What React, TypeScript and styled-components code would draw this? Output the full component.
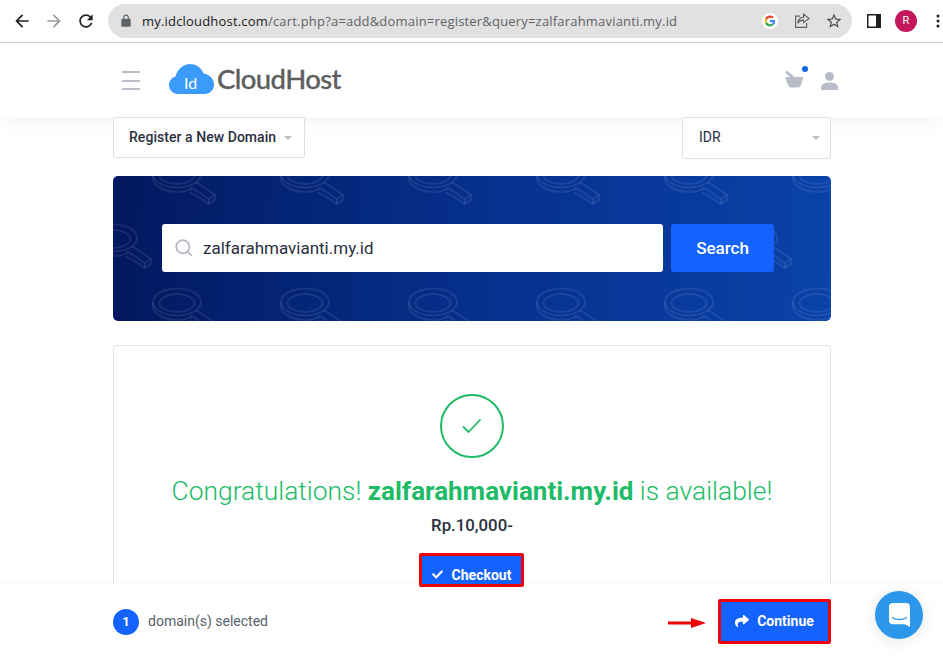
import React from "react";
import styled, { createGlobalStyle } from "styled-components";
import { FaCheck, FaShare } from "react-icons/fa";

const Global = createGlobalStyle`
  html, body { margin: 0; padding: 0; background: #fff; }
  body { font-family: Roboto, "Liberation Sans", sans-serif; color: #2a3040; }
  * { box-sizing: border-box; }
`;

const Page = styled.div`
  position: relative;
  width: 943px;
  height: 659px;
  overflow: hidden;
  background: #fff;
  display: flex;
  flex-direction: column;
`;

const Toolbar = styled.div`
  height: 43px;
  flex: none;
  display: flex;
  align-items: center;
  padding: 0 0 1px 6px;
  background: #fff;
  border-bottom: 1px solid #cfcfd1;
  overflow: hidden;
`;

const IconBox = styled.div<{ $w?: number }>`
  width: ${(p) => p.$w ?? 32}px;
  height: 32px;
  flex: none;
  display: flex;
  align-items: center;
  justify-content: center;
`;

const NavGroup = styled.div`
  display: flex;
  margin-right: 6px;
`;

const Omnibox = styled.div`
  width: 744px;
  height: 34px;
  flex: none;
  border-radius: 17px;
  background: #e1e1e1;
  display: flex;
  align-items: center;
  padding: 0 2px 0 11px;
`;

const UrlText = styled.div`
  flex: 1;
  margin-left: 9px;
  font-family: "Open Sans", "Noto Sans", sans-serif;
  font-size: 13px;
  letter-spacing: 0.19px;
  color: #5f6368;
  white-space: nowrap;
`;

const UrlHost = styled.span`
  color: #202124;
`;

const ChromeRight = styled.div`
  display: flex;
  margin-left: 6px;
`;

const Avatar = styled.div`
  width: 22px;
  height: 22px;
  border-radius: 50%;
  background: #c2185b;
  color: #fff;
  font-size: 11px;
  display: flex;
  align-items: center;
  justify-content: center;
`;

const Header = styled.header`
  height: 74px;
  flex: none;
  display: flex;
  align-items: center;
  padding: 0 105px 0 122px;
  background: #fff;
  box-shadow: 0 6px 16px rgba(40, 50, 80, 0.05);
  position: relative;
`;

const Burger = styled.div`
  width: 18px;
  height: 19px;
  margin: 1px 29px 0 0;
  display: flex;
  flex-direction: column;
  justify-content: space-between;
`;

const BurgerLine = styled.span`
  display: block;
  height: 2px;
  background: #b9bdc9;
`;

const Logo = styled.div`
  display: flex;
  align-items: center;
  margin-top: -2px;
`;

const LogoCloud = styled.div`
  position: relative;
  width: 45px;
  height: 30px;
  margin-right: 3px;
`;

const LogoId = styled.span`
  position: absolute;
  left: 15px;
  top: 11px;
  font-family: Lato, sans-serif;
  font-size: 16px;
  line-height: 16px;
  font-weight: 400;
  color: #fff;
`;

const LogoWord = styled.span`
  font-family: Lato, sans-serif;
  font-size: 27.5px;
  line-height: 30px;
  font-weight: 500;
  letter-spacing: -0.6px;
  color: #5e5e5e;
  -webkit-text-stroke: 0.3px #5e5e5e;
`;

const HeaderIcons = styled.div`
  margin-left: auto;
  display: flex;
  align-items: center;
  gap: 17px;
  margin-top: 2px;
`;

const BasketWrap = styled.div`
  position: relative;
  width: 20px;
  height: 18px;
  margin-bottom: 4px;
`;

const BasketDot = styled.span`
  position: absolute;
  right: -4px;
  top: -4px;
  width: 6px;
  height: 6px;
  border-radius: 50%;
  background: #1268e6;
`;

const Main = styled.main`
  width: 718px;
  margin-left: 113px;
  flex: none;
  position: relative;
`;

const SelectRow = styled.div`
  display: flex;
  justify-content: space-between;
  align-items: flex-start;
`;

const Select = styled.div<{ $w: number; $h: number; $medium?: boolean; $left: number; $right: number }>`
  width: ${(p) => p.$w}px;
  height: ${(p) => p.$h}px;
  background: #fff;
  border: 1px solid #dcdfe6;
  border-radius: 2px;
  display: flex;
  align-items: center;
  padding: 0 ${(p) => p.$right}px 2px ${(p) => p.$left}px;
  font-size: 14px;
  font-weight: ${(p) => (p.$medium ? 500 : 400)};
  letter-spacing: 0.05px;
  color: #2a3040;
  position: relative;
`;

const Caret = styled.span`
  margin-left: auto;
  width: 0;
  height: 0;
  margin-top: 2px;
  border-left: 4px solid transparent;
  border-right: 4px solid transparent;
  border-top: 4px solid #b9bdc9;
`;

const Banner = styled.section`
  position: relative;
  overflow: hidden;
  height: 145px;
  margin-top: 17px;
  border-radius: 5px;
  background: linear-gradient(92deg, #02185f 0%, #06308c 50%, #0a42aa 100%);
  display: flex;
  align-items: center;
  padding: 0 57px 2px 49px;
  gap: 8px;
`;

const BannerPattern = styled.svg`
  position: absolute;
  inset: 0;
  width: 100%;
  height: 100%;
`;

const SearchInput = styled.div`
  position: relative;
  flex: 1;
  height: 48px;
  background: #fff;
  border-radius: 3px;
  display: flex;
  align-items: center;
  padding-left: 13px;
  gap: 10px;
  font-size: 17px;
  color: #2a3040;
`;

const SearchButton = styled.button`
  position: relative;
  width: 103px;
  height: 48px;
  border: 0;
  border-radius: 3px;
  background: #1463ff;
  color: #fff;
  font: 500 17px Roboto, sans-serif;
  padding: 0;
`;

const Card = styled.section`
  margin-top: 24px;
  height: 320px;
  border: 1px solid #e4e6eb;
  border-radius: 4px;
  display: flex;
  flex-direction: column;
  align-items: center;
  padding-top: 48px;
`;

const SuccessRing = styled.div`
  width: 64px;
  height: 64px;
  border-radius: 50%;
  border: 2px solid #20bb66;
  display: flex;
  align-items: center;
  justify-content: center;
`;

const Title = styled.h1`
  margin: 17px 0 0;
  font-size: 26.4px;
  line-height: 32px;
  font-weight: 300;
  color: #20bb66;
  white-space: nowrap;
`;

const TitleStrong = styled.strong`
  font-size: 26px;
  font-weight: 700;
`;

const Price = styled.div`
  margin-top: 8px;
  font-size: 16.8px;
  line-height: 20px;
  font-weight: 500;
  color: #2a3040;
`;

const ActionButton = styled.button<{ $w: number; $h: number; $gap: number; $pt: number; $pb: number }>`
  width: ${(p) => p.$w}px;
  height: ${(p) => p.$h}px;
  flex: none;
  position: relative;
  z-index: 2;
  display: flex;
  align-items: center;
  justify-content: center;
  gap: ${(p) => p.$gap}px;
  background: #1463ff;
  border: 3px solid #f00000;
  border-radius: 2px;
  color: #fff;
  font: 700 14px Roboto, sans-serif;
  padding: ${(p) => p.$pt}px 0 ${(p) => p.$pb}px;
`;

const CheckoutSpot = styled.div`
  margin: 18px 1px 0 0;
`;

const Footer = styled.footer`
  position: absolute;
  left: 0;
  right: 0;
  bottom: 0;
  height: 75px;
  z-index: 1;
  background: #fff;
  box-shadow: 0 -2px 8px rgba(40, 50, 80, 0.04);
  display: flex;
  align-items: center;
  padding: 0 112px 0 113px;
`;

const CountBadge = styled.div`
  width: 26px;
  height: 26px;
  border-radius: 50%;
  background: #1463ff;
  color: #fff;
  font-size: 13px;
  font-weight: 700;
  display: flex;
  align-items: center;
  justify-content: center;
`;

const FooterLabel = styled.span`
  margin: 0 0 2px 9px;
  font-size: 14px;
  color: #5a5f6c;
`;

const RedArrow = styled.svg`
  margin-left: auto;
  margin-right: 12px;
  margin-top: 3px;
`;

const ChatBubble = styled.div`
  position: absolute;
  right: 20px;
  bottom: 20px;
  width: 48px;
  height: 48px;
  border-radius: 50%;
  background: #2a97ea;
  box-shadow: 0 2px 16px rgba(0, 0, 0, 0.1);
  z-index: 3;
  display: flex;
  align-items: center;
  justify-content: center;
`;

const Glyph = ({ d, fill, size = 24 }: { d: string; fill: string; size?: number }) => (
  <svg width={size} height={size} viewBox="0 0 24 24">
    <path d={d} fill={fill} />
  </svg>
);

const Magnifier = ({ x, y }: { x: number; y: number }) => (
  <g transform={`translate(${x} ${y})`} fill="none" stroke="#ffffff" strokeOpacity="0.09" strokeWidth="1.7">
    <ellipse cx="25" cy="14" rx="24" ry="13.5" />
    <ellipse cx="25" cy="15" rx="17.5" ry="9" />
    <path d="M1 14v4c0 7.5 10.5 14 24 14 6 0 11-1.2 15-3.5" />
    <path d="M44 22l19 13v5l-6 4-19-12" />
    <path d="M63 35l-6 4v5M57 39L39 27" />
  </g>
);

export default function App() {
  return (
    <Page>
      <Global />
      <Toolbar>
        <NavGroup>
          <IconBox>
            <Glyph fill="#202124" size={20} d="M20 11H7.83l5.59-5.59L12 4l-8 8 8 8 1.41-1.41L7.83 13H20v-2z" />
          </IconBox>
          <IconBox>
            <Glyph fill="#9a9b9d" size={20} d="M12 4l-1.41 1.41L16.17 11H4v2h12.17l-5.58 5.59L12 20l8-8z" />
          </IconBox>
          <IconBox>
            <Glyph
              fill="#202124"
              size={20}
              d="M17.65 6.35C16.2 4.9 14.21 4 12 4c-4.42 0-7.99 3.58-7.99 8s3.57 8 7.99 8c3.73 0 6.84-2.55 7.73-6h-2.08c-.82 2.33-3.04 4-5.65 4-3.31 0-6-2.69-6-6s2.69-6 6-6c1.66 0 3.14.69 4.22 1.78L13 11h7V4l-2.35 2.35z"
            />
          </IconBox>
        </NavGroup>
        <Omnibox>
          <Glyph
            fill="#5f6368"
            size={14}
            d="M18 8h-1V6c0-2.76-2.24-5-5-5S7 3.24 7 6v2H6c-1.1 0-2 .9-2 2v10c0 1.1.9 2 2 2h12c1.1 0 2-.9 2-2V10c0-1.1-.9-2-2-2zM9 6c0-1.66 1.34-3 3-3s3 1.34 3 3v2H9V6z"
          />
          <UrlText>
            <UrlHost>my.idcloudhost.com</UrlHost>/cart.php?a=add&amp;domain=register&amp;query=zalfarahmavianti.my.id
          </UrlText>
          <IconBox>
            <svg width="16" height="16" viewBox="0 0 16 16">
              <circle cx="8" cy="8" r="8" fill="#fff" />
              <g transform="translate(2.6 2.6) scale(0.225)">
                <path fill="#EA4335" d="M24 9.5c3.5 0 6.7 1.2 9.2 3.6l6.9-6.9C35.9 2.4 30.5 0 24 0 14.6 0 6.5 5.4 2.6 13.2l8 6.2C12.4 13.7 17.7 9.5 24 9.5z" />
                <path fill="#4285F4" d="M47 24.5c0-1.6-.1-3.1-.4-4.5H24v9h12.9c-.6 3-2.2 5.5-4.7 7.2l7.7 6C44.4 37.9 47 31.8 47 24.5z" />
                <path fill="#FBBC05" d="M10.5 28.6c-.5-1.4-.8-3-.8-4.6s.3-3.2.8-4.6l-8-6.2C.9 16.5 0 20.1 0 24s.9 7.5 2.6 10.8l7.9-6.2z" />
                <path fill="#34A853" d="M24 48c6.5 0 11.9-2.1 15.9-5.8l-7.7-6c-2.2 1.4-4.9 2.3-8.2 2.3-6.3 0-11.6-4.2-13.5-9.9l-8 6.2C6.5 42.6 14.6 48 24 48z" />
              </g>
            </svg>
          </IconBox>
          <IconBox>
            <svg width="16" height="16" viewBox="0 0 16 16" fill="none" stroke="#5f6368" strokeWidth="1.2">
              <path d="M6 3.2H1.6v11.2h11V10" />
              <path d="M9.6 1.2L15 5.4l-5.4 4.2V7.2c-2.8 0-4.6 1-5.8 3 .3-3.4 2.4-5.6 5.8-6z" />
            </svg>
          </IconBox>
          <IconBox>
            <Glyph
              fill="#4b4c4f"
              size={18}
              d="M22 9.24l-7.19-.62L12 2 9.19 8.63 2 9.24l5.46 4.73L5.82 21 12 17.27 18.18 21l-1.63-7.03L22 9.24zM12 15.4l-3.76 2.27 1-4.28-3.32-2.88 4.38-.38L12 6.1l1.71 4.04 4.38.38-3.32 2.88 1 4.28L12 15.4z"
            />
          </IconBox>
        </Omnibox>
        <ChromeRight>
          <IconBox>
            <svg width="14" height="14" viewBox="0 0 14 14">
              <rect x="0" y="0" width="14" height="14" fill="#202124" />
              <rect x="1.5" y="1.5" width="7.5" height="11" fill="#fff" />
            </svg>
          </IconBox>
          <IconBox>
            <Avatar>R</Avatar>
          </IconBox>
          <IconBox>
            <svg width="4" height="14" viewBox="0 0 4 14" fill="#202124">
              <circle cx="2" cy="2" r="1.5" />
              <circle cx="2" cy="7" r="1.5" />
              <circle cx="2" cy="12" r="1.5" />
            </svg>
          </IconBox>
        </ChromeRight>
      </Toolbar>

      <Header>
        <Burger>
          <BurgerLine />
          <BurgerLine />
          <BurgerLine />
        </Burger>
        <Logo>
          <LogoCloud>
            <svg width="45" height="30" viewBox="0 0 45 30">
              <path
                fill="#3a9bfb"
                d="M9 30C3.5 30 0 25.5 0 21c0-4 2.8-7.5 6.5-8.5C8.5 5 14.5 0 21 0c6.5 0 11.5 4 13.5 9.5C40.5 10.5 45 15 45 20.5 45 26 41 30 35 30z"
              />
            </svg>
            <LogoId>Id</LogoId>
          </LogoCloud>
          <LogoWord>CloudHost</LogoWord>
        </Logo>
        <HeaderIcons>
          <BasketWrap>
            <svg width="20" height="18" viewBox="0 0 20 18" fill="#b9bdc9">
              <path d="M1.5 2.5L3 .5 10.5 7h9l-2.500 8c-.4 1.400-1.500 2.500-3 2.500H7c-1.500 0-2.600-1-3-2.500L1 7h5z" />
            </svg>
            <BasketDot />
          </BasketWrap>
          <svg width="17" height="18" viewBox="0 0 17 18" fill="#b9bdc9">
            <circle cx="8.5" cy="4.5" r="4.5" />
            <path d="M0 18v-2.500C0 12.500 3 10.500 8.500 10.500S17 12.500 17 15.500V18z" />
          </svg>
        </HeaderIcons>
      </Header>

      <Main>
        <SelectRow>
          <Select $w={192} $h={41} $medium $left={15} $right={12}>
            Register a New Domain
            <Caret />
          </Select>
          <Select $w={149} $h={42} $left={16} $right={10}>
            IDR
            <Caret />
          </Select>
        </SelectRow>

        <Banner>
          <BannerPattern aria-hidden="true">
            <defs>
              <pattern id="mag" x="39" y="-16" width="128" height="128" patternUnits="userSpaceOnUse">
                <Magnifier x={0} y={0} />
                <Magnifier x={64} y={64} />
              </pattern>
            </defs>
            <rect width="100%" height="100%" fill="url(#mag)" />
          </BannerPattern>
          <SearchInput>
            <svg width="18" height="18" viewBox="0 0 18 18" fill="none" stroke="#b3b8c4" strokeWidth="1.7">
              <circle cx="7.8" cy="7.8" r="6.6" />
              <path d="M12.6 12.6L17 17" />
            </svg>
            zalfarahmavianti.my.id
          </SearchInput>
          <SearchButton>Search</SearchButton>
        </Banner>

        <Card>
          <SuccessRing>
            <svg width="20" height="16" viewBox="0 0 20 16" fill="none" stroke="#20bb66" strokeWidth="1.8">
              <path d="M1 8.5L6.5 14 18.5 1.5" />
            </svg>
          </SuccessRing>
          <Title>
            Congratulations! <TitleStrong>zalfarahmavianti.my.id</TitleStrong> is available!
          </Title>
          <Price>Rp.10,000-</Price>
          <CheckoutSpot>
            <ActionButton $w={105} $h={34} $gap={9} $pt={9} $pb={0}>
              <FaCheck size={11} />
              Checkout
            </ActionButton>
          </CheckoutSpot>
        </Card>
      </Main>

      <Footer>
        <CountBadge>1</CountBadge>
        <FooterLabel>domain(s) selected</FooterLabel>
        <RedArrow width="38" height="12" viewBox="0 0 38 12">
          <path d="M0 4.5h23V1l15 5-15 5V7.500H0z" fill="#f00000" />
        </RedArrow>
        <ActionButton $w={113} $h={45} $gap={8} $pt={0} $pb={2}>
          <FaShare size={14} />
          Continue
        </ActionButton>
      </Footer>

      <ChatBubble>
        <svg width="21" height="24" viewBox="0 0 21 24">
          <path d="M3.5 0h14c1.900 0 3.500 1.600 3.500 3.500V24l-5.500-2.800H3.500C1.600 21.200 0 19.600 0 17.700V3.500C0 1.600 1.600 0 3.500 0z" fill="#fff" />
          <path d="M3 14.500c4.500 2.600 10.500 2.600 15 0" fill="none" stroke="#2a97ea" strokeWidth="1.2" />
        </svg>
      </ChatBubble>
    </Page>
  );
}
